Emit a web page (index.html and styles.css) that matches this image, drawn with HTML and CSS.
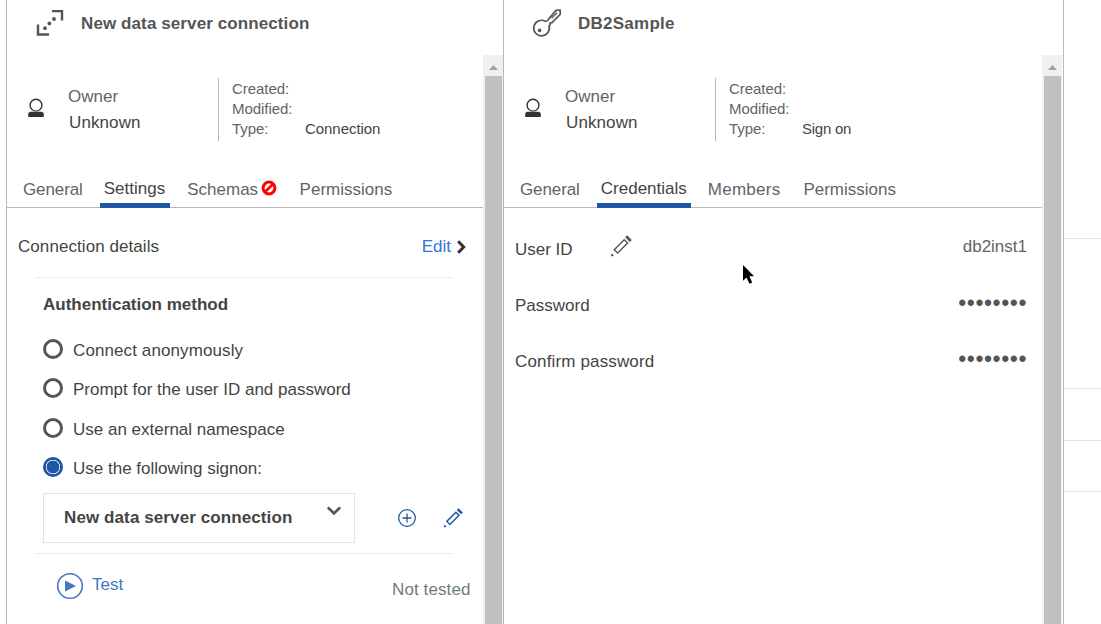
FILE: index.html
```html
<!DOCTYPE html>
<html lang="en">
<head>
<meta charset="utf-8">
<title>Data server connection</title>
<link rel="stylesheet" href="styles.css">
</head>
<body>
<main class="app">
  <section class="panel panel-connection">
    <header class="panel-header">
      <svg class="header-icon" width="28" height="28" viewBox="0 0 28 28"><path d="M16 2.1h10v9.4M2 15.5v10h11" fill="none" stroke="#555" stroke-width="2.4"/><g fill="#555"><circle cx="9" cy="19.2" r="1.9"/><circle cx="13.4" cy="14.4" r="1.9"/><circle cx="18" cy="10" r="1.9"/></g></svg>
      <h1 class="title">New data server connection</h1>
    </header>
    <div class="panel-body">
      <div class="content">
        <div class="meta">
          <svg class="person" width="18" height="20" viewBox="0 0 18 20"><path d="M1.2 19v-2.6q0-2.6 2.6-2.6h10.4q2.6 0 2.6 2.6V19z" fill="#333"/><circle cx="9" cy="7.2" r="6.8" fill="#fff"/><circle cx="9" cy="7.2" r="5.9" fill="#fff" stroke="#333" stroke-width="1.4"/></svg>
          <div class="owner"><span class="muted">Owner</span><span class="owner-name">Unknown</span></div>
          <dl class="facts"><dt>Created:</dt><dd></dd><dt>Modified:</dt><dd></dd><dt>Type:</dt><dd>Connection</dd></dl>
        </div>
        <nav class="tabs">
          <a class="tab">General</a><a class="tab active settings">Settings</a><a class="tab schemas">Schemas<svg class="blocked" width="16" height="16" viewBox="0 0 16 16"><circle cx="8" cy="8" r="5.9" fill="none" stroke="#f00" stroke-width="3"/><path d="M4 12 12 4" stroke="#f00" stroke-width="2.6"/></svg></a><a class="tab">Permissions</a>
        </nav>
        <div class="details">
          <span class="details-label">Connection details</span>
          <a class="edit">Edit<svg class="arrow" width="11" height="16" viewBox="0 0 11 16"><path d="M2.2 2.2 7.7 8l-5.5 5.8" fill="none" stroke="#333" stroke-width="3"/></svg></a>
        </div>
        <div class="auth">
          <h2 class="auth-title">Authentication method</h2>
          <div class="radio anonymous"><i class="dot"></i>Connect anonymously</div>
          <div class="radio"><i class="dot"></i>Prompt for the user ID and password</div>
          <div class="radio third"><i class="dot"></i>Use an external namespace</div>
          <div class="radio"><i class="dot checked"></i>Use the following signon:</div>
          <div class="signon">
            <div class="select">New data server connection<svg class="chevron" width="16" height="12" viewBox="0 0 16 12"><path d="m1.8 2.4 6.2 6 6.2-6" fill="none" stroke="#555" stroke-width="2.7"/></svg></div>
            <svg class="add" width="20" height="20" viewBox="0 0 20 20"><path d="M10 5.5v9M5.5 10h9" stroke="#1f57a4" stroke-width="1.3"/><circle cx="10" cy="10" r="8.3" fill="none" stroke="#1f57a4" stroke-width="1.3"/></svg>
            <svg class="pencil-blue" width="20" height="20" viewBox="0 0 22 22"><path d="m4.2 14.7 10-10 3.4 3.4-10 10z" fill="none" stroke="#1f57a4" stroke-width="1.6"/><path d="m15.1 2.2 2-2 4.7 4.7-2 2zM.8 21.4l.9-3.2 2.3 2.3z" fill="#1f57a4"/></svg>
          </div>
        </div>
        <div class="test">
          <svg width="28" height="28" viewBox="0 0 28 28"><circle cx="14" cy="14" r="12.3" fill="none" stroke="#4178be" stroke-width="1.6"/><path d="m9 8.5 11 5.5-11 5.5z" fill="#4178be"/></svg>
          <a class="test-link">Test</a><span class="status">Not tested</span>
        </div>
      </div>
      <div class="scrollbar"><i class="up"></i><div class="thumb"></div></div>
    </div>
  </section>
  <section class="panel panel-signon">
    <header class="panel-header">
      <svg class="header-icon key" width="30" height="30" viewBox="0 0 30 30"><path d="M13.2 13.2Q15.8 13.6 16.4 11.4L24 2.4 28.2 2v4.3L20 14.6l-1.9.2.1 1.9-1.2 1.1A7.8 7.8 0 1 1 13.2 13.2z" fill="none" stroke="#555" stroke-width="1.7" stroke-linejoin="round"/><path d="m19.6 10.2 5.4-5.4" stroke="#555" stroke-width="1.3"/><circle cx="7.6" cy="22.4" r="1.8" fill="#555"/></svg>
      <h1 class="title">DB2Sample</h1>
    </header>
    <div class="panel-body">
      <div class="content">
        <div class="meta">
          <svg class="person" width="18" height="20" viewBox="0 0 18 20"><path d="M1.2 19v-2.6q0-2.6 2.6-2.6h10.4q2.6 0 2.6 2.6V19z" fill="#333"/><circle cx="9" cy="7.2" r="6.8" fill="#fff"/><circle cx="9" cy="7.2" r="5.9" fill="#fff" stroke="#333" stroke-width="1.4"/></svg>
          <div class="owner"><span class="muted">Owner</span><span class="owner-name">Unknown</span></div>
          <dl class="facts"><dt>Created:</dt><dd></dd><dt>Modified:</dt><dd></dd><dt>Type:</dt><dd class="sign-on">Sign on</dd></dl>
        </div>
        <nav class="tabs">
          <a class="tab">General</a><a class="tab active">Credentials</a><a class="tab members">Members</a><a class="tab">Permissions</a>
        </nav>
        <div class="fields">
          <div class="field"><span>User ID</span><svg class="pencil" width="22" height="22" viewBox="0 0 22 22"><path d="m4.2 14.7 10-10 3.4 3.4-10 10z" fill="none" stroke="#555" stroke-width="1.4"/><path d="m15.1 2.2 2-2 4.7 4.7-2 2zM.8 21.4l.9-3.2 2.3 2.3z" fill="#555"/></svg><span class="value">db2inst1</span></div>
          <div class="field"><span>Password</span><span class="value bullets">••••••••</span></div>
          <div class="field"><span class="confirm">Confirm password</span><span class="value bullets">••••••••</span></div>
        </div>
      </div>
      <div class="scrollbar"><i class="up"></i><div class="thumb"></div></div>
    </div>
  </section>
  <aside class="backdrop"><div class="row first"></div><div class="row second"></div><div class="row third-row"></div><div class="row fourth"></div></aside>
  <svg class="cursor" width="13" height="21" viewBox="0 0 13 21"><path d="M1 1v15.7l3.5-3.3 3 6.3 2.7-1.2-2.8-6.2h4.7z" fill="#000"/></svg>
</main>
</body>
</html>
```
FILE: styles.css
```css
* { box-sizing: border-box; }
body {
  margin: 0;
  background: #fff;
  font: 17px/22px "Liberation Sans", Arial, sans-serif;
  color: #444;
  overflow: hidden;
}
h1, h2, dl, dd { margin: 0; font-size: inherit; }
svg { display: block; flex: none; }

.app { display: flex; height: 624px; padding-left: 6px; position: relative; }
.panel { display: flex; flex-direction: column; border-left: 1px solid #b8b8b8; }
.panel-connection { width: 497px; }
.panel-signon { width: 561px; border-right: 1px solid #b8b8b8; }
.panel-signon .panel-body { padding-right: 1px; }

.panel-header { display: flex; height: 55px; padding: 9px 0 0 29px; }
.header-icon { margin-right: 17px; }
.header-icon.key { margin: -1px 16px 0 -1px; }
.title { padding-top: 4px; font-weight: bold; color: #555; letter-spacing: .1px; }
.key + .title { letter-spacing: .25px; }

.panel-body { display: flex; flex: 1; min-height: 0; }
.content { flex: 1; min-width: 0; }
.scrollbar { width: 20px; padding: 11px 1px 0 2px; background: #f0f0f0; }
.up {
  display: block; width: 9px; height: 5px; margin: -1px 0 6px 4px;
  background: #a0a0a0; clip-path: polygon(50% 0, 100% 100%, 0 100%);
}
.thumb { height: 548px; background: #c0c0c0; }

.meta { display: flex; height: 118px; padding: 23px 0 0 20px; }
.person { margin: 20px 0 0 -.5px; }
.owner { width: 173.5px; padding: 8px 0 0 23.5px; }
.owner span { display: block; }
.muted { color: #646464; }
.owner .owner-name { margin: 4px 0 0 1px; letter-spacing: .1px; }
.facts {
  display: grid; grid-template-columns: 73px auto; grid-auto-rows: 20px;
  height: 63px; padding: 1px 0 0 13px;
  border-left: 1px solid #b8b8b8; font-size: 15px; line-height: 20px; letter-spacing: -.05px;
}
.facts dt { color: #646464; }
.sign-on { letter-spacing: -.25px; }

.tabs { display: flex; height: 35px; padding-left: 12px; border-bottom: 1px solid #b8b8b8; }
.tab { display: flex; height: 35px; padding: 6px 4px 0; margin-right: 13px; color: #646464; }
.tab:first-child { margin-right: 13px; letter-spacing: -.1px; }
.tab.active { padding: 5px 4px 0; border-bottom: 5px solid #2057a5; color: #444; }
.tab.settings { padding-right: 5px; }
.tab.members { margin-right: 15px; letter-spacing: .25px; }
.blocked { margin-left: 3px; margin-top: 1px; }
.tab.schemas { margin-right: 14.5px; }

.details { display: flex; justify-content: space-between; height: 69px; padding: 28px 16px 0 11px; }
.details-label { letter-spacing: .07px; }
.edit { display: flex; color: #3274d9; }
.arrow { margin: 3px 0 0 5px; }

.auth { width: 418px; height: 277px; margin-left: 28px; padding: 16px 0 0 8px; border: solid #ededed; border-width: 1px 0; }
.auth-title { height: 44px; }
.radio { display: flex; align-items: flex-start; height: 39px; line-height: 24px; padding-top: 1px; }
.radio.anonymous { letter-spacing: .1px; }
.radio.third { padding-top: 2px; height: 40px; }
.dot { width: 20px; height: 20px; margin-right: 10px; border: 3px solid #555; border-radius: 50%; }
.dot.checked { border: 0; background: radial-gradient(circle, #2057a5 6.2px, #d5e3f5 6.6px, #d5e3f5 7px, #2057a5 7.5px); }
.signon { display: flex; align-items: center; height: 50px; margin-right: -18px; margin-top: -2px; }
.select {
  display: flex; justify-content: space-between; width: 312px; height: 50px;
  padding: 13px 12px 0 20px; border: 1px solid #e2e2e2; font-weight: bold; letter-spacing: .1px;
}
.chevron { margin-top: -2px; }
.add { margin-left: 42px; }
.pencil-blue { margin-left: 26px; }

.test { display: flex; padding: 18px 12.5px 0 49px; }
.test-link { margin: 2px 0 0 8px; color: #4178be; }
.status { margin: 7px 0 0 auto; color: #707c7c; letter-spacing: .1px; }

.fields { padding: 28px 15px 0 11px; }
.field { display: flex; height: 56px; padding-top: 2px; line-height: 24px; }
.pencil { margin: -3px 0 0 37px; }
.confirm { letter-spacing: .15px; }
.value { margin: -3px 0 0 auto; color: #646464; }
.bullets { font-size: 23px; letter-spacing: .55px; color: #555; }

.backdrop { flex: 1; }
.row { border-bottom: 1px solid #e5e5e5; }
.first { height: 239px; }
.second { height: 150px; }
.third-row { height: 52px; }
.fourth { height: 51px; }
.cursor { position: absolute; left: 742px; top: 264px; }
```
